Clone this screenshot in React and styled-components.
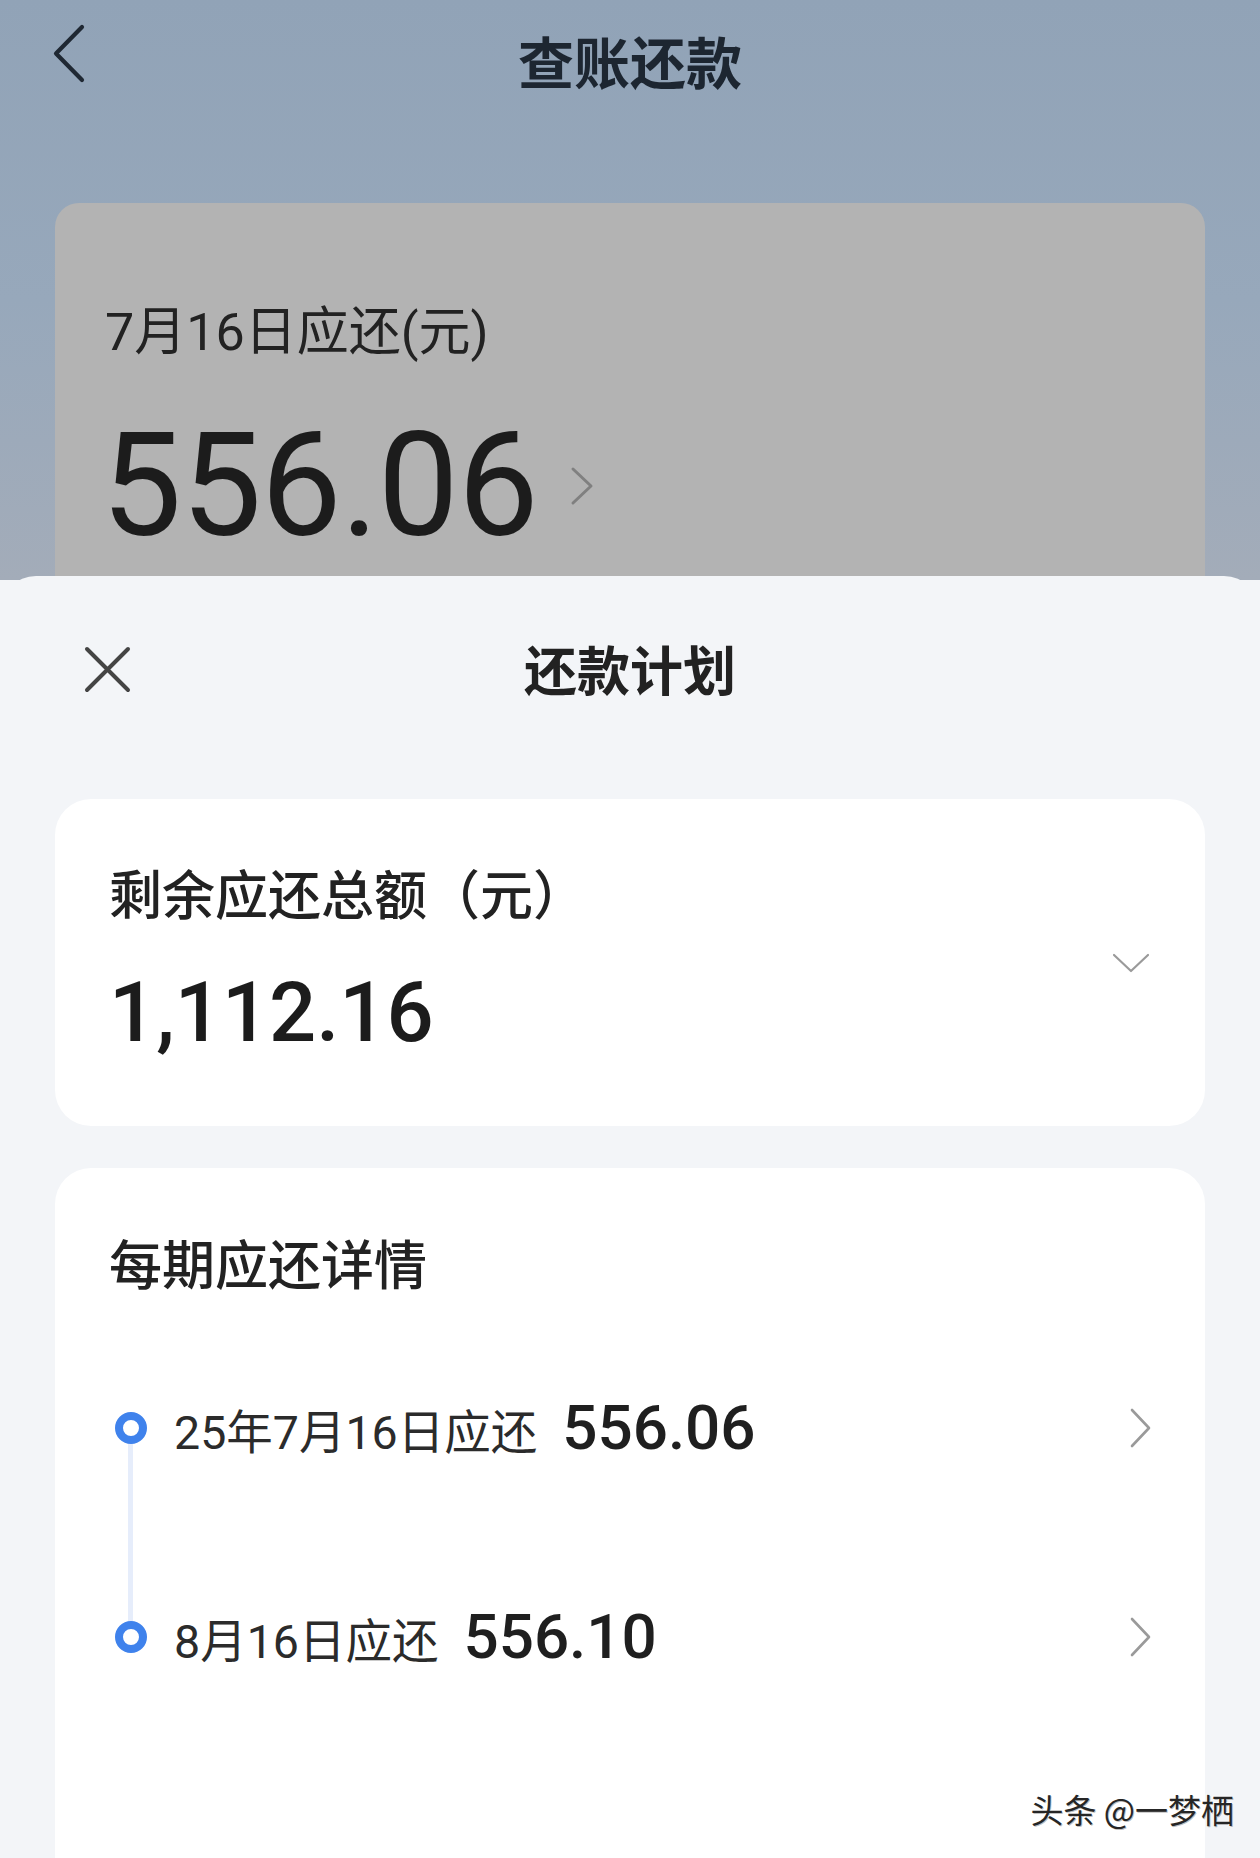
import React from "react";
import styled, { createGlobalStyle } from "styled-components";

const GlobalStyle = createGlobalStyle`
  html, body { margin: 0; padding: 0; }
  body {
    background: #f3f5f8;
    font-family: "Roboto", "Noto Sans CJK SC", "Noto Sans", sans-serif;
    -webkit-font-smoothing: antialiased;
  }
  * { box-sizing: border-box; }
`;

const Page = styled.div`
  position: relative;
  width: 1260px;
  height: 1858px;
  overflow: hidden;
  background: linear-gradient(180deg, #91a3b7 0px, #97a8bb 300px, #a3acb9 580px, #f3f5f8 580px);
`;

const TopBar = styled.header`
  display: grid;
  grid-template-columns: 1fr auto 1fr;
  align-items: center;
  height: 120px;
`;

const BackButton = styled.button`
  justify-self: start;
  align-self: start;
  margin: 24px 0 0 52px;
  padding: 0;
  border: 0;
  background: none;
  display: flex;
  color: #1f2833;
`;

const TopTitle = styled.h1`
  margin: 0;
  font-family: "Noto Sans CJK SC", sans-serif;
  font-size: 56px;
  font-weight: 700;
  line-height: 1.2;
  color: #1d2631;
`;

const DueCard = styled.section`
  margin: 83px 55px 0;
  height: 440px;
  border-radius: 24px;
  background: #b3b3b3;
  padding: 98px 0 0 50px;
`;

const DueLabel = styled.div`
  font-size: 52px;
  line-height: 64px;
  color: #222;
  font-weight: 400;
`;

const DueRow = styled.div`
  display: flex;
  align-items: center;
  gap: 32px;
  margin-top: 49px;
`;

const BigAmount = styled.div`
  font-family: "Roboto", sans-serif;
  font-size: 144px;
  line-height: 1;
  font-weight: 400;
  color: #1c1c1c;
  letter-spacing: -1px;
  margin-left: -4px;
`;

const Sheet = styled.div`
  position: absolute;
  top: 576px;
  left: 0;
  right: 0;
  bottom: 0;
  background: #f3f5f8;
  border-radius: 36px 36px 0 0;
`;

const SheetHeader = styled.div`
  display: grid;
  grid-template-columns: 1fr auto 1fr;
  align-items: center;
  height: 186px;
`;

const CloseButton = styled.button`
  justify-self: start;
  margin-left: 84px;
  padding: 0;
  border: 0;
  background: none;
  display: flex;
  color: #444;
`;

const SheetTitle = styled.h2`
  margin: 0;
  font-family: "Noto Sans CJK SC", sans-serif;
  font-size: 53px;
  font-weight: 700;
  line-height: 1.2;
  color: #222;
`;

const Cards = styled.div`
  display: flex;
  flex-direction: column;
  gap: 42px;
  margin-top: 37px;
  padding: 0 55px;
`;

const Card = styled.section`
  background: #ffffff;
  border-radius: 36px;
  height: ${(p) => p.$height};
`;

const TotalCard = styled(Card)`
  display: flex;
  justify-content: space-between;
  padding: 0 55px 0 54px;
`;

const TotalInfo = styled.div`
  align-self: flex-start;
  margin-top: 62px;
`;

const CardLabel = styled.div`
  font-family: "Noto Sans CJK SC", sans-serif;
  font-size: 53px;
  line-height: 62px;
  font-weight: 500;
  color: #222;
`;

const TotalAmount = styled.div`
  margin-top: 48px;
  font-family: "Roboto", sans-serif;
  font-size: 83px;
  line-height: 1;
  font-weight: 500;
  color: #1c1c1c;
`;

const ExpandIcon = styled.span`
  align-self: center;
  display: flex;
  color: #9a9a9a;
`;

const PlanCard = styled(Card)`
  padding: 63px 0 0 54px;
`;

const Timeline = styled.ol`
  list-style: none;
  margin: 30px 0 0 0;
  padding: 0;
`;

const Entry = styled.li`
  position: relative;
  display: flex;
  align-items: center;
  height: 209px;
  padding: 0 54px 0 6px;

  &:not(:last-child)::after {
    content: "";
    position: absolute;
    left: 19px;
    top: 50%;
    width: 5px;
    height: 100%;
    background: #e6edfb;
  }
`;

const Dot = styled.span`
  position: relative;
  z-index: 1;
  flex: none;
  width: 32px;
  height: 32px;
  border-radius: 50%;
  background: #fff;
  border: 8.5px solid #3f82ec;
  margin-right: 27px;
`;

const EntryText = styled.div`
  display: flex;
  align-items: baseline;
  gap: 25px;
`;

const EntryDate = styled.span`
  font-size: 46.5px;
  color: #2b2b2b;
  font-weight: 400;
`;

const EntryAmount = styled.span`
  font-family: "Roboto", sans-serif;
  font-size: 62px;
  font-weight: 500;
  color: #1f1f1f;
`;

const EntryArrow = styled.span`
  margin-left: auto;
  display: flex;
  color: #9a9a9a;
`;

const Watermark = styled.div`
  position: absolute;
  right: 26px;
  bottom: 28px;
  font-family: "Noto Sans CJK SC", sans-serif;
  font-size: 33px;
  line-height: 1.2;
  color: #262626;
  text-shadow: -1px -1px 0 rgba(255, 255, 255, 0.9), 1px 1px 0 rgba(0, 0, 0, 0.25);
  white-space: nowrap;
`;

const ChevronLeft = () => (
  <svg width="34" height="60" viewBox="0 0 34 60" fill="none">
    <path d="M30 3 L4 29.5 L30 56" stroke="currentColor" strokeWidth="4.2" strokeLinecap="round" strokeLinejoin="round" />
  </svg>
);

const CloseIcon = () => (
  <svg width="47" height="47" viewBox="0 0 47 47" fill="none">
    <path d="M3 3 L44 44 M44 3 L3 44" stroke="currentColor" strokeWidth="4" strokeLinecap="round" />
  </svg>
);

const SmallChevronRight = () => (
  <svg width="24" height="40" viewBox="0 0 24 40" fill="none" style={{ color: "#808080" }}>
    <path d="M3 3 L21 20 L3 37" stroke="currentColor" strokeWidth="3" strokeLinecap="round" strokeLinejoin="round" />
  </svg>
);

const ChevronDown = () => (
  <svg width="38" height="22" viewBox="0 0 38 22" fill="none">
    <path d="M2 3 L19 19 L36 3" stroke="currentColor" strokeWidth="2.2" strokeLinecap="round" strokeLinejoin="round" />
  </svg>
);

const RowChevron = () => (
  <svg width="22" height="40" viewBox="0 0 22 40" fill="none">
    <path d="M3 2 L20 20 L3 38" stroke="currentColor" strokeWidth="2.6" strokeLinecap="round" strokeLinejoin="round" />
  </svg>
);

const plan = [
  { date: "25年7月16日应还", amount: "556.06" },
  { date: "8月16日应还", amount: "556.10" },
];

export default function App() {
  return (
    <>
      <GlobalStyle />
      <Page>
        <TopBar>
          <BackButton aria-label="返回">
            <ChevronLeft />
          </BackButton>
          <TopTitle>查账还款</TopTitle>
          <span />
        </TopBar>

        <DueCard>
          <DueLabel>7月16日应还(元)</DueLabel>
          <DueRow>
            <BigAmount>556.06</BigAmount>
            <SmallChevronRight />
          </DueRow>
        </DueCard>

        <Sheet>
          <SheetHeader>
            <CloseButton aria-label="关闭">
              <CloseIcon />
            </CloseButton>
            <SheetTitle>还款计划</SheetTitle>
            <span />
          </SheetHeader>

          <Cards>
            <TotalCard $height="327px">
              <TotalInfo>
                <CardLabel>剩余应还总额（元）</CardLabel>
                <TotalAmount>1,112.16</TotalAmount>
              </TotalInfo>
              <ExpandIcon>
                <ChevronDown />
              </ExpandIcon>
            </TotalCard>

            <PlanCard $height="760px">
              <CardLabel>每期应还详情</CardLabel>
              <Timeline>
                {plan.map((p) => (
                  <Entry key={p.date}>
                    <Dot />
                    <EntryText>
                      <EntryDate>{p.date}</EntryDate>
                      <EntryAmount>{p.amount}</EntryAmount>
                    </EntryText>
                    <EntryArrow>
                      <RowChevron />
                    </EntryArrow>
                  </Entry>
                ))}
              </Timeline>
            </PlanCard>
          </Cards>
        </Sheet>

        <Watermark>头条 @一梦栖</Watermark>
      </Page>
    </>
  );
}
